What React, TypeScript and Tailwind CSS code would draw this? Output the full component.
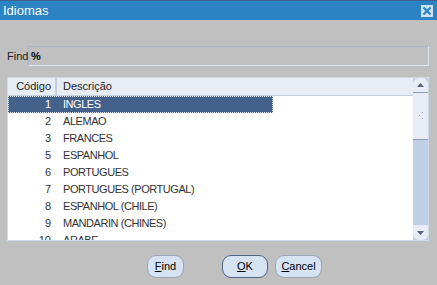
import React from 'react';

const rows = [
  { code: 1, name: 'INGLES' },
  { code: 2, name: 'ALEMAO' },
  { code: 3, name: 'FRANCES' },
  { code: 5, name: 'ESPANHOL' },
  { code: 6, name: 'PORTUGUES' },
  { code: 7, name: 'PORTUGUES (PORTUGAL)' },
  { code: 8, name: 'ESPANHOL (CHILE)' },
  { code: 9, name: 'MANDARIN (CHINES)' },
  { code: 10, name: 'ARABE' },
];

function Btn({ first, rest, strong }: { first: string; rest: string; strong?: boolean }) {
  return (
    <button
      className={
        'h-[23px] w-full rounded-[9px] bg-[#d5e3f3] text-[11px] text-black border ' +
        (strong ? 'border-[#4f6584]' : 'border-[#9aa6b8]')
      }
    >
      <span className="underline">{first}</span>
      {rest}
    </button>
  );
}

export default function App() {
  return (
    <div
      className="w-[437px] h-[285px] bg-[#c0c0c0] flex flex-col overflow-hidden"
      style={{ fontFamily: '"Liberation Sans", Arial, sans-serif' }}
    >
      {/* Title bar */}
      <div className="h-[20px] bg-[#2b83c3] border-t border-[#3f5f8f] flex items-center justify-between pl-[3px] pr-[4px]">
        <span className="text-white text-[13px] leading-none">Idiomas</span>
        <div className="w-[12px] h-[12px] bg-[#cde2f4] flex items-center justify-center">
          <svg width="10" height="10" viewBox="0 0 10 10">
            <path d="M1.5 1.5 L8.5 8.5 M8.5 1.5 L1.5 8.5" stroke="#2b83c3" strokeWidth="2.2" />
          </svg>
        </div>
      </div>

      {/* Find row */}
      <div className="flex items-center mt-[26px] pl-[7px] pr-[8px] h-[20px]">
        <span className="text-[11px] text-[#222] w-[21px]">Find</span>
        <div className="flex-1 h-[20px] border border-[#aab6c8] border-r-[#dde6f2] border-b-[#dde6f2] flex items-center pl-[2px]">
          <span className="text-[11px] font-bold text-black">%</span>
        </div>
      </div>

      {/* List */}
      <div className="mt-[11px] ml-[7px] mr-[8px] h-[164px] border border-[#cfdae8] bg-white flex overflow-hidden">
        <div className="flex-1 flex flex-col overflow-hidden">
          <div className="h-[18px] shrink-0 bg-[#e8edf5] border-b border-[#c5d0de] flex text-[11px] text-[#222]">
            <div className="w-[49px] border-r-2 border-[#c5d0de] text-right pr-[4px] leading-[17px]">Código</div>
            <div className="pl-[6px] leading-[17px]">Descrição</div>
          </div>
          {rows.map((r, i) => (
            <div
              key={r.code}
              className={
                'h-[17px] shrink-0 flex text-[11px] leading-[17px] w-[265px] ' +
                (i === 0 ? 'bg-[#44618b] text-white border border-dotted border-[#e0e8f0]' : 'text-[#333]')
              }
            >
              <div className={'text-right ' + (i === 0 ? 'w-[42px] leading-[15px]' : 'w-[43px]')}>{r.code}</div>
              <div className={'pl-[12px] tracking-[-0.45px] ' + (i === 0 ? 'leading-[15px]' : '')}>{r.name}</div>
            </div>
          ))}
        </div>
        {/* Scrollbar */}
        <div className="w-[15px] bg-[#bfd0e6] flex flex-col">
          <div className="h-[15px] bg-[#e8edf5] rounded-t-[6px] border-b border-[#8d9bb0] flex items-center justify-center">
            <svg width="7" height="4" viewBox="0 0 7 4"><path d="M3.5 0 L7 4 L0 4 Z" fill="#5b6278" /></svg>
          </div>
          <div className="h-[47px] bg-[#e8edf5] border-b border-[#8d9bb0] flex items-center justify-center">
            <svg width="8" height="10" viewBox="0 0 8 10">
              <path d="M6 1 L5 2 M3 4 L2 5 M6 7 L5 8" stroke="#9aa8c0" strokeWidth="1" />
            </svg>
          </div>
          <div className="flex-1" />
          <div className="h-[15px] bg-[#e8edf5] rounded-b-[6px] flex items-center justify-center">
            <svg width="7" height="4" viewBox="0 0 7 4"><path d="M0 0 L7 0 L3.5 4 Z" fill="#5b6278" /></svg>
          </div>
        </div>
      </div>

      {/* Buttons */}
      <div className="flex mt-[12px] pl-[147px]">
        <div className="w-[37px]"><Btn first="F" rest="ind" /></div>
        <div className="ml-[38px] w-[46px]"><Btn first="O" rest="K" strong /></div>
        <div className="ml-[7px] w-[47px]"><Btn first="C" rest="ancel" /></div>
      </div>
    </div>
  );
}
